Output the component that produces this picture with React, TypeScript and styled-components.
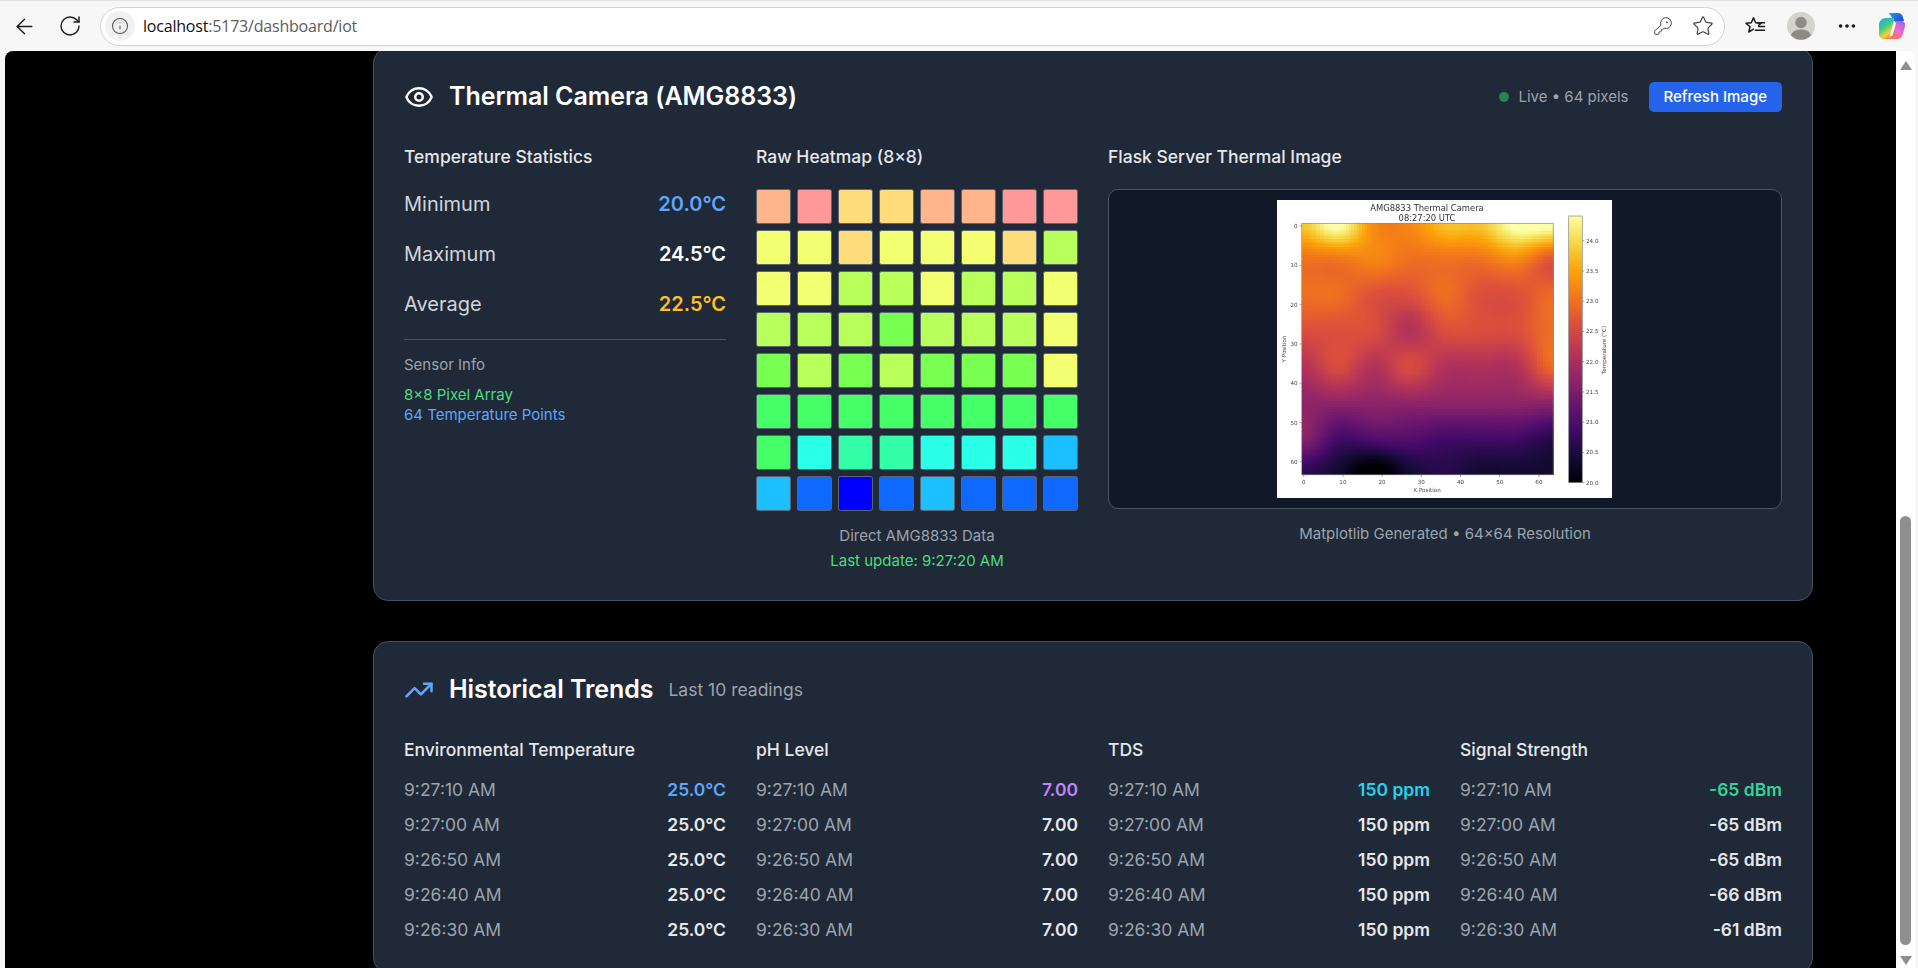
import React from "react";
import styled, { createGlobalStyle } from "styled-components";
import { ArrowLeft, Eye, Info, KeyRound, MoreHorizontal, RotateCw, Star, TrendingUp } from "lucide-react";

const c = {
  peach: "#ffb48c",
  pink: "#ff9999",
  amber: "#ffdc7a",
  yellow: "#f3ff70",
  lime: "#b9ff5c",
  green: "#77ff52",
  mint: "#44ff66",
  teal: "#33ffa8",
  cyan: "#2affe8",
  sky: "#1cc0ff",
  blue: "#0f68ff",
  deep: "#0000ff",
};

type Key = keyof typeof c;

// rough temperature for each colour, tuned against the matplotlib picture
const temps: Record<Key, number> = {
  pink: 24.7,
  peach: 23.9,
  amber: 23.3,
  yellow: 23.05,
  lime: 22.65,
  green: 22.1,
  mint: 21.75,
  teal: 21.1,
  cyan: 20.9,
  sky: 20.6,
  blue: 20.35,
  deep: 19.7,
};

const pixels: Key[][] = [
  ["peach", "pink", "amber", "amber", "peach", "peach", "pink", "pink"],
  ["yellow", "yellow", "amber", "yellow", "yellow", "yellow", "amber", "lime"],
  ["yellow", "yellow", "lime", "lime", "yellow", "lime", "lime", "yellow"],
  ["lime", "lime", "lime", "green", "lime", "lime", "lime", "yellow"],
  ["green", "lime", "green", "lime", "green", "green", "green", "yellow"],
  ["mint", "mint", "mint", "mint", "mint", "mint", "mint", "mint"],
  ["mint", "cyan", "teal", "teal", "cyan", "cyan", "cyan", "sky"],
  ["sky", "blue", "deep", "blue", "sky", "blue", "blue", "blue"],
];

const inferno = [
  [0, 0, 4],
  [22, 11, 57],
  [66, 10, 104],
  [106, 23, 110],
  [147, 38, 103],
  [188, 55, 84],
  [221, 81, 58],
  [243, 120, 25],
  [252, 165, 10],
  [246, 215, 70],
  [252, 255, 164],
];

const colorAt = (t: number) => {
  const v = Math.max(0, Math.min(0.9999, t)) * 10;
  const i = Math.floor(v);
  const f = v - i;
  const [a, b] = [inferno[i], inferno[i + 1]];
  return `rgb(${a.map((n, k) => Math.round(n + (b[k] - n) * f)).join(",")})`;
};

const cubic = (p: number[], t: number) =>
  0.5 *
  (2 * p[1] +
    (p[2] - p[0]) * t +
    (2 * p[0] - 5 * p[1] + 4 * p[2] - p[3]) * t * t +
    (3 * p[1] - p[0] - 3 * p[2] + p[3]) * t * t * t);

const sample = (x: number, y: number) => {
  const clamp = (n: number) => Math.max(0, Math.min(7, n));
  const ix = Math.min(6, Math.floor(x));
  const iy = Math.min(6, Math.floor(y));
  const rows = [-1, 0, 1, 2].map((dy) =>
    cubic(
      [-1, 0, 1, 2].map((dx) => temps[pixels[clamp(iy + dy)][clamp(ix + dx)]]),
      x - ix,
    ),
  );
  return cubic(rows, y - iy);
};

const PLOT = { x: 24.7, y: 23.3, size: 251.5 };
const STEPS = 96;
const BLUR = 2;

// the picture is softer than plain bicubic, so box-blur the grid a couple of times
const boxBlur = (grid: number[][]) => {
  const at = (n: number) => Math.max(0, Math.min(STEPS - 1, n));
  const span = BLUR * 2 + 1;
  const across = grid.map((line) =>
    line.map((_, x) => {
      let sum = 0;
      for (let d = -BLUR; d <= BLUR; d++) sum += line[at(x + d)];
      return sum / span;
    }),
  );
  return across.map((line, y) =>
    line.map((_, x) => {
      let sum = 0;
      for (let d = -BLUR; d <= BLUR; d++) sum += across[at(y + d)][x];
      return sum / span;
    }),
  );
};

const plotGrid = boxBlur(
  boxBlur(
    Array.from({ length: STEPS }, (_, row) =>
      Array.from({ length: STEPS }, (_, col) => sample((col / (STEPS - 1)) * 7, (row / (STEPS - 1)) * 7)),
    ),
  ),
);

const plotCells = plotGrid.flatMap((line, row) =>
  line.map((temp, col) => ({ col, row, fill: colorAt((temp - 20) / 4.5) })),
);

const ThermalPlot = () => {
  const unit = PLOT.size / STEPS;
  const ticks = [0, 10, 20, 30, 40, 50, 60];
  const barTicks = ["24.0", "23.5", "23.0", "22.5", "22.0", "21.5", "21.0", "20.5", "20.0"];
  return (
    <PlotSvg width={335} height={298} viewBox="0 0 335 298">
      <rect width="335" height="298" fill="#fff" />
      <text x="150" y="10.5" textAnchor="middle" fontSize="8.4" fill="#333">AMG8833 Thermal Camera</text>
      <text x="150" y="21" textAnchor="middle" fontSize="8.4" fill="#333">08:27:20 UTC</text>
      <g shapeRendering="crispEdges">
        {plotCells.map((p) => (
          <rect
            key={`${p.col}-${p.row}`}
            x={PLOT.x + p.col * unit}
            y={PLOT.y + p.row * unit}
            width={unit + 0.4}
            height={unit + 0.4}
            fill={p.fill}
          />
        ))}
      </g>
      <rect x={PLOT.x} y={PLOT.y} width={PLOT.size} height={PLOT.size} fill="none" stroke="#8a8a8a" strokeWidth="0.7" />
      {ticks.map((t) => (
        <g key={t} fill="#444" fontSize="5.6">
          <line x1={26.7 + t * 3.92} x2={26.7 + t * 3.92} y1="275" y2="277" stroke="#555" strokeWidth="0.5" />
          <text x={26.7 + t * 3.92} y="283.8" textAnchor="middle">{t}</text>
          <line x1="22.7" x2="24.7" y1={26 + t * 3.93} y2={26 + t * 3.93} stroke="#555" strokeWidth="0.5" />
          <text x="20.5" y={28 + t * 3.93} textAnchor="end">{t}</text>
        </g>
      ))}
      <text x="150" y="292" textAnchor="middle" fontSize="5.6" fill="#444">X Position</text>
      <text transform="translate(8.8 149) rotate(-90)" textAnchor="middle" fontSize="5.6" fill="#444">Y Position</text>
      <defs>
        <linearGradient id="barGradient" x1="0" y1="1" x2="0" y2="0">
          {inferno.map((rgb, i) => (
            <stop key={i} offset={i / 10} stopColor={`rgb(${rgb.join(",")})`} />
          ))}
        </linearGradient>
      </defs>
      <rect x="291.7" y="16" width="13.6" height="266.7" fill="url(#barGradient)" stroke="#8a8a8a" strokeWidth="0.7" />
      {barTicks.map((label, i) => (
        <g key={label} fill="#444" fontSize="5.6">
          <line x1="305.3" x2="307.3" y1={40.7 + i * 30.25} y2={40.7 + i * 30.25} stroke="#555" strokeWidth="0.5" />
          <text x="309" y={42.7 + i * 30.25}>{label}</text>
        </g>
      ))}
      <text transform="translate(329 150) rotate(-90)" textAnchor="middle" fontSize="5.6" fill="#444">Temperature (°C)</text>
    </PlotSvg>
  );
};

const FavoritesIcon = () => (
  <svg width="24" height="24" viewBox="0 0 24 24" fill="none" stroke="#1a1a1a" strokeWidth="1.5" strokeLinejoin="round" strokeLinecap="round">
    <path d="M15.5 11.5l2.5-2.300-5.300-.5-2.200-5-2.200 5-5.300.5 4 3.600-1.200 5.200 4.700-2.800" />
    <path d="M14.500 8.800h7M15.500 12.500h6M12.500 16.200h9" />
  </svg>
);

const AvatarIcon = () => (
  <svg width="28" height="28" viewBox="0 0 28 28">
    <circle cx="14" cy="14" r="14" fill="#d5d3ce" />
    <circle cx="14" cy="10.500" r="5.800" fill="#8d8b87" />
    <path d="M4 23.500c1.500-4.500 5-6 10-6s8.500 1.500 10 6a14 14 0 0 1-20 0z" fill="#8d8b87" />
  </svg>
);

const CopilotIcon = () => (
  <svg width="28" height="28" viewBox="0 0 28 28">
    <defs>
      <linearGradient id="copilotTop" x1="0" y1="0" x2="1" y2="0.6">
        <stop offset="0" stopColor="#2f9bf0" />
        <stop offset="1" stopColor="#1a4fd8" />
      </linearGradient>
      <linearGradient id="copilotLeft" x1="0.2" y1="0" x2="0.7" y2="1">
        <stop offset="0" stopColor="#22a8f0" />
        <stop offset="0.4" stopColor="#3cd07c" />
        <stop offset="0.75" stopColor="#f5d23c" />
        <stop offset="1" stopColor="#f2683a" />
      </linearGradient>
      <linearGradient id="copilotRight" x1="0.9" y1="0" x2="0.2" y2="1">
        <stop offset="0" stopColor="#a45cf0" />
        <stop offset="0.5" stopColor="#ee6ec8" />
        <stop offset="1" stopColor="#f4783c" />
      </linearGradient>
    </defs>
    <path d="M11 1h9c2.500 0 4 1.500 4.800 4l1.200 4H16z" fill="url(#copilotTop)" />
    <path d="M8 6h7c1 0 1.500.5 1.200 1.500L11 27H6c-3 0-5-2-5-5v-9c0-4 3-7 7-7z" fill="url(#copilotLeft)" />
    <path d="M17 9h6c3 0 4.500 2 4 5l-2 8c-.8 3-3 5-6 5H9c2 0 3-1 3.500-2.500z" fill="url(#copilotRight)" />
    <path d="M17 11.500L13.500 23" stroke="#fff" strokeWidth="2" strokeLinecap="round" />
  </svg>
);

const history = [
  { time: "9:27:10 AM", signal: "-65 dBm" },
  { time: "9:27:00 AM", signal: "-65 dBm" },
  { time: "9:26:50 AM", signal: "-65 dBm" },
  { time: "9:26:40 AM", signal: "-66 dBm" },
  { time: "9:26:30 AM", signal: "-61 dBm" },
];

const trends = [
  { title: "Environmental Temperature", accent: "#60a5fa", value: () => "25.0°C" },
  { title: "pH Level", accent: "#c084fc", value: () => "7.00" },
  { title: "TDS", accent: "#22d3ee", value: () => "150 ppm" },
  { title: "Signal Strength", accent: "#34d399", value: (s: string) => s },
];

const App = () => (
  <>
    <GlobalStyle />
    <Window>
      <Toolbar>
        <NavButton>
          <ArrowLeft size={25} strokeWidth={1.4} />
        </NavButton>
        <NavButton>
          <RotateCw size={24} strokeWidth={1.4} />
        </NavButton>
        <AddressBar>
          <SiteInfo>
            <Info size={18} strokeWidth={1.4} />
          </SiteInfo>
          <Url>
            <strong>localhost</strong>:5173/dashboard/iot
          </Url>
          <AddressIcon>
            <KeyRound size={20} strokeWidth={1.2} />
          </AddressIcon>
          <AddressIcon>
            <Star size={22} strokeWidth={1.3} />
          </AddressIcon>
        </AddressBar>
        <ToolIcons>
          <FavoritesIcon />
          <AvatarIcon />
          <MoreHorizontal size={22} strokeWidth={2} color="#1a1a1a" />
          <CopilotIcon />
        </ToolIcons>
      </Toolbar>
      <Viewport>
        <Main>
          <ThermalCard>
            <CardHeader>
              <CardTitle>
                <Eye size={30} strokeWidth={2} color="#fff" />
                <h2>Thermal Camera (AMG8833)</h2>
              </CardTitle>
              <HeaderStatus>
                <LiveDot />
                <span>Live • 64 pixels</span>
                <RefreshButton>Refresh Image</RefreshButton>
              </HeaderStatus>
            </CardHeader>
            <Columns>
              <div>
                <SectionTitle>Temperature Statistics</SectionTitle>
                <Stats>
                  <StatRow>
                    <span>Minimum</span>
                    <StatValue $color="#60a5fa">20.0°C</StatValue>
                  </StatRow>
                  <StatRow>
                    <span>Maximum</span>
                    <StatValue $color="#ffffff">24.5°C</StatValue>
                  </StatRow>
                  <StatRow>
                    <span>Average</span>
                    <StatValue $color="#fbbf24">22.5°C</StatValue>
                  </StatRow>
                </Stats>
                <SensorInfo>
                  <SensorLabel>Sensor Info</SensorLabel>
                  <SensorLine $color="#4ade80">8×8 Pixel Array</SensorLine>
                  <SensorLine $color="#60a5fa">64 Temperature Points</SensorLine>
                </SensorInfo>
              </div>
              <div>
                <SectionTitle>Raw Heatmap (8×8)</SectionTitle>
                <Heatmap>
                  {pixels.flat().map((key, i) => (
                    <HeatCell key={i} $color={c[key]} />
                  ))}
                </Heatmap>
                <Caption>Direct AMG8833 Data</Caption>
                <Caption $color="#4ade80" $gap={5}>Last update: 9:27:20 AM</Caption>
              </div>
              <WideColumn>
                <SectionTitle>Flask Server Thermal Image</SectionTitle>
                <ImageFrame>
                  <ThermalPlot />
                </ImageFrame>
                <Caption>Matplotlib Generated • 64×64 Resolution</Caption>
              </WideColumn>
            </Columns>
          </ThermalCard>
          <TrendsCard>
            <CardHeader>
              <CardTitle>
                <TrendingUp size={30} strokeWidth={2} color="#60a5fa" />
                <h2>Historical Trends</h2>
                <Subtitle>Last 10 readings</Subtitle>
              </CardTitle>
            </CardHeader>
            <Columns>
              {trends.map((trend) => (
                <div key={trend.title}>
                  <TrendTitle>{trend.title}</TrendTitle>
                  <TrendRows>
                    {history.map((row, i) => (
                      <TrendRow key={row.time}>
                        <span>{row.time}</span>
                        <TrendValue $color={i === 0 ? trend.accent : "#e5e7eb"}>{trend.value(row.signal)}</TrendValue>
                      </TrendRow>
                    ))}
                  </TrendRows>
                </div>
              ))}
            </Columns>
          </TrendsCard>
        </Main>
        <Scrollbar>
          <ArrowUp />
          <ThumbTrack>
            <Thumb />
          </ThumbTrack>
          <ArrowDown />
        </Scrollbar>
      </Viewport>
    </Window>
  </>
);

export default App;

const GlobalStyle = createGlobalStyle`
  html, body {
    margin: 0;
    height: 100%;
    overflow: hidden;
    background: #f7f7f7;
    font-family: Inter, "Noto Sans", sans-serif;
  }
  * {
    box-sizing: border-box;
  }
  h2, h3 {
    margin: 0;
  }
`;

const Window = styled.div`
  width: 1918px;
  height: 968px;
  display: flex;
  flex-direction: column;
  overflow: hidden;
`;

const Toolbar = styled.header`
  height: 51px;
  flex: none;
  display: flex;
  align-items: center;
  padding: 0 12px 0 12px;
  border-top: 1px solid #e2e2e2;
  color: #1a1a1a;
`;

const NavButton = styled.div`
  width: 45px;
  display: flex;
  align-items: center;
  justify-content: flex-start;

  & + & {
    padding-left: 1px;
  }
`;

const AddressBar = styled.div`
  width: 1625px;
  height: 39px;
  margin-left: -2px;
  display: flex;
  align-items: center;
  padding: 0 1px 0 4px;
  background: #fff;
  border: 1px solid #d2d2d2;
  border-radius: 20px;
`;

const SiteInfo = styled.div`
  width: 30px;
  height: 30px;
  flex: none;
  border-radius: 50%;
  background: #f1f1f1;
  color: #555;
  display: flex;
  align-items: center;
  justify-content: center;
`;

const Url = styled.div`
  flex: 1;
  margin-left: 8px;
  font-family: "Open Sans", "Noto Sans", sans-serif;
  font-size: 16px;
  letter-spacing: -0.2px;
  color: #5c5c5c;

  strong {
    font-weight: 400;
    color: #111;
  }
`;

const AddressIcon = styled.div`
  width: 40px;
  display: flex;
  justify-content: center;
  color: #444;
`;

const ToolIcons = styled.div`
  flex: 1;
  display: flex;
  align-items: center;
  justify-content: space-between;
  padding-left: 18px;
`;

const Viewport = styled.div`
  flex: 1;
  min-height: 0;
  margin: 0 3px 0 5px;
  display: flex;
  border-radius: 8px 8px 0 0;
  overflow: hidden;
`;

const Main = styled.main`
  flex: 1;
  min-width: 0;
  background: #000;
  padding: 0 83px 0 368px;
  overflow: hidden;
`;

const Card = styled.section`
  background: #1f2937;
  border: 1px solid #465162;
  border-radius: 15px;
  padding: 30px;
`;

const ThermalCard = styled(Card)`
  margin-top: -3px;
  padding-bottom: 29px;
`;

const TrendsCard = styled(Card)`
  margin-top: 40px;
`;

const CardHeader = styled.div`
  display: flex;
  align-items: center;
  justify-content: space-between;
  margin-bottom: 30px;
`;

const CardTitle = styled.div`
  display: flex;
  align-items: center;
  gap: 15px;

  h2 {
    font-size: 25px;
    line-height: 35px;
    font-weight: 600;
    letter-spacing: -0.05px;
    color: #fff;
  }
`;

const Subtitle = styled.span`
  font-size: 17.5px;
  color: #9ca3af;
`;

const HeaderStatus = styled.div`
  display: flex;
  align-items: center;
  font-size: 15px;
  color: #9ca3af;
`;

const LiveDot = styled.i`
  width: 10px;
  height: 10px;
  border-radius: 50%;
  background: #2a8552;
  margin-right: 9px;
`;

const RefreshButton = styled.button`
  height: 30px;
  margin-left: 20px;
  padding: 0 15px;
  border: 0;
  border-radius: 5px;
  background: #2563eb;
  color: #fff;
  font: 500 15px Inter, sans-serif;
`;

const Columns = styled.div`
  display: grid;
  grid-template-columns: repeat(4, 322px);
  column-gap: 30px;
`;

const WideColumn = styled.div`
  grid-column: span 2;
`;

const SectionTitle = styled.h3`
  font-size: 17.5px;
  line-height: 25px;
  font-weight: 500;
  color: #e5e7eb;
  margin-bottom: 20px !important;
`;

const Stats = styled.div`
  display: flex;
  flex-direction: column;
  gap: 20px;
`;

const StatRow = styled.div`
  height: 30px;
  display: flex;
  align-items: center;
  justify-content: space-between;
  font-size: 20px;
  color: #d1d5db;
`;

const StatValue = styled.span<{ $color: string }>`
  font-weight: 600;
  color: ${({ $color }) => $color};
`;

const SensorInfo = styled.div`
  margin-top: 20px;
  padding-top: 15px;
  border-top: 1px solid #4b5563;
`;

const SensorLabel = styled.div`
  font-size: 15px;
  line-height: 20px;
  color: #9ca3af;
  margin-bottom: 10px;
`;

const SensorLine = styled.div<{ $color: string }>`
  font-size: 15px;
  line-height: 20px;
  color: ${({ $color }) => $color};
`;

const Heatmap = styled.div`
  display: grid;
  grid-template-columns: repeat(8, 1fr);
  gap: 6.25px;
`;

const HeatCell = styled.div<{ $color: string }>`
  aspect-ratio: 1;
  background: ${({ $color }) => $color};
  border: 1px solid #5b6472;
  border-radius: 2.5px;
`;

const Caption = styled.div<{ $color?: string; $gap?: number }>`
  margin-top: ${({ $gap }) => $gap ?? 15}px;
  font-size: 15px;
  line-height: 20px;
  text-align: center;
  color: ${({ $color }) => $color ?? "#9ca3af"};
`;

const ImageFrame = styled.div`
  height: 320px;
  display: flex;
  align-items: center;
  justify-content: center;
  padding: 0 1px 1px 0;
  background: #111827;
  border: 1px solid #4b5563;
  border-radius: 10px;
`;

const PlotSvg = styled.svg`
  display: block;
  font-family: "DejaVu Sans", sans-serif;
  filter: blur(0.35px);
`;

const TrendTitle = styled.h3`
  font-size: 17.5px;
  line-height: 25px;
  font-weight: 500;
  color: #e5e7eb;
  margin-bottom: 15px !important;
`;

const TrendRows = styled.div`
  display: flex;
  flex-direction: column;
  gap: 10px;
`;

const TrendRow = styled.div`
  display: flex;
  justify-content: space-between;
  font-size: 17.5px;
  line-height: 25px;
  color: #9ca3af;
`;

const TrendValue = styled.span<{ $color: string }>`
  font-weight: 600;
  color: ${({ $color }) => $color};
`;

const Scrollbar = styled.aside`
  width: 19px;
  flex: none;
  background: #fff;
  display: flex;
  flex-direction: column;
  align-items: center;
  padding: 10px 0 3px;
`;

const ArrowUp = styled.div`
  width: 0;
  height: 0;
  border-left: 6px solid transparent;
  border-right: 6px solid transparent;
  border-bottom: 9px solid #8f8f8f;
`;

const ArrowDown = styled(ArrowUp)`
  transform: rotate(180deg);
`;

const ThumbTrack = styled.div`
  flex: 1;
  width: 100%;
  display: flex;
  justify-content: center;
  align-items: flex-end;
  padding-bottom: 11px;
`;

const Thumb = styled.div`
  width: 11px;
  height: 429px;
  border-radius: 6px;
  background: #8f8f8f;
`;
